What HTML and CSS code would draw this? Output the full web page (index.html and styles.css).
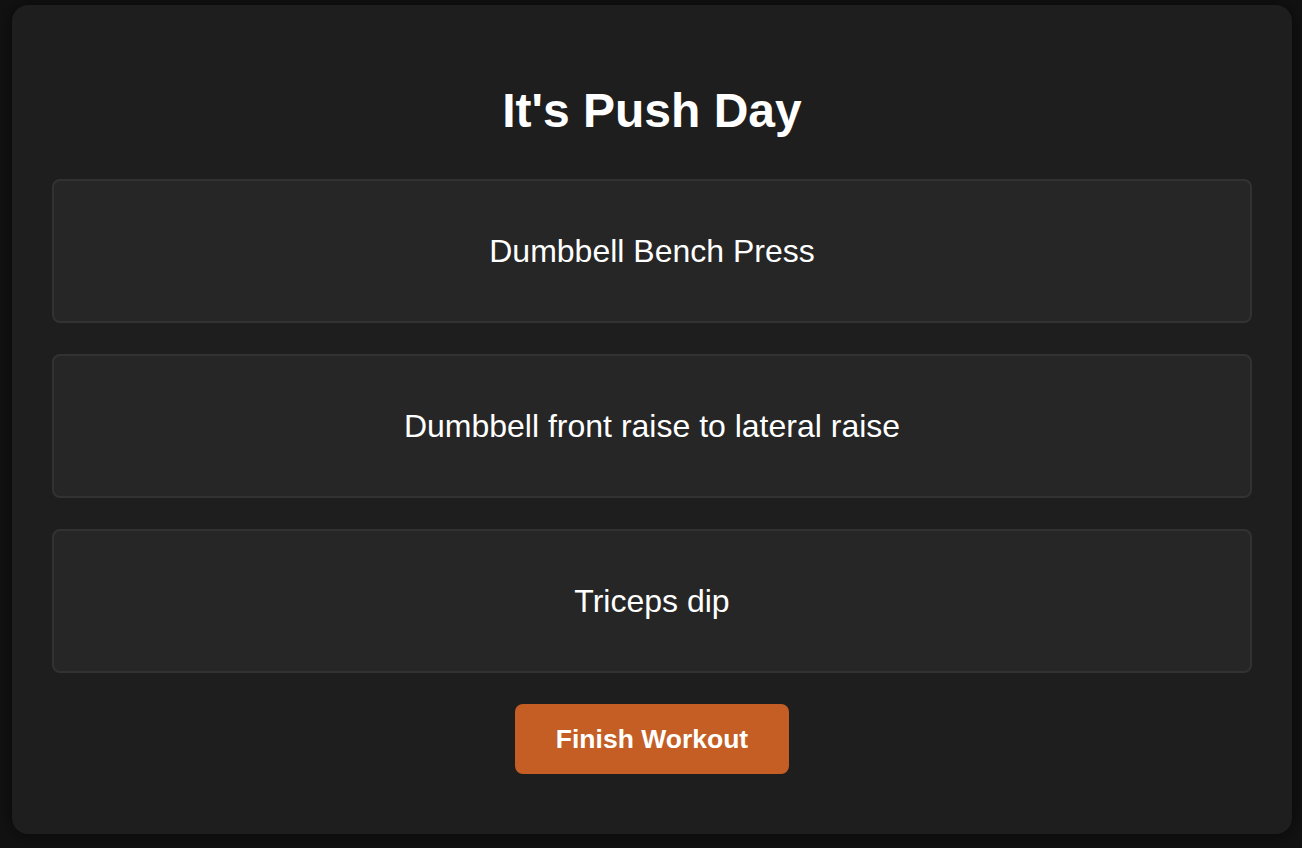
FILE: index.html
```html
<!DOCTYPE html>
<html lang="en">
<head>
<meta charset="utf-8">
<title>Push Day</title>
<link rel="stylesheet" href="styles.css">
</head>
<body>
  <main class="panel">
    <h1 class="title">It's Push Day</h1>
    <ul class="exercises">
      <li class="exercise">Dumbbell Bench Press</li>
      <li class="exercise">Dumbbell front raise to lateral raise</li>
      <li class="exercise">Triceps dip</li>
    </ul>
    <div class="actions">
      <button class="finish" type="button">Finish Workout</button>
    </div>
  </main>
</body>
</html>
```
FILE: styles.css
```css
html, body {
  margin: 0;
  padding: 0;
  background: #121212;
  font-family: "Liberation Sans", Arial, sans-serif;
  color: #ffffff;
}

body {
  padding: 5px 10px 14px 12px;
}

.panel {
  width: 1280px;
  box-sizing: border-box;
  background: #1e1e1e;
  border-radius: 16px;
  padding: 40px 40px 60px;
  box-shadow: 0 0 20px rgba(0, 0, 0, 0.55);
}

.title {
  margin: 38px 0 41px;
  font-size: 48px;
  font-weight: 700;
  line-height: normal;
  text-align: center;
}

.exercises {
  list-style: none;
  margin: 0;
  padding: 0;
  display: flex;
  flex-direction: column;
  gap: 31px;
}

.exercise {
  background: #262626;
  border: 2px solid #323232;
  border-radius: 8px;
  padding: 52px 20px;
  font-size: 32px;
  line-height: 36px;
  text-align: center;
}

.actions {
  display: flex;
  justify-content: center;
  margin-top: 31px;
}

.finish {
  background: #c45e24;
  color: #ffffff;
  border: none;
  border-radius: 8px;
  width: 274px;
  height: 70px;
  font-family: "Liberation Sans", Arial, sans-serif;
  font-size: 26.5px;
  font-weight: 700;
  cursor: pointer;
}
```
